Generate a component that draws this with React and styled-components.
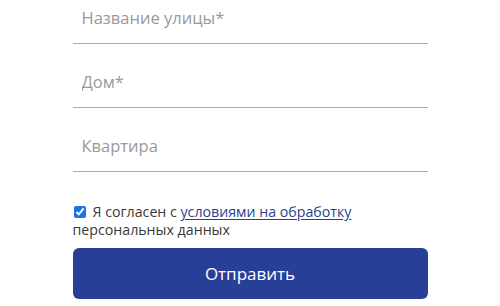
import React from "react";
import styled, { createGlobalStyle } from "styled-components";

const GlobalStyle = createGlobalStyle`
  html, body {
    margin: 0;
    padding: 0;
    background: #fff;
    overflow: hidden;
  }
  body {
    font-family: "Open Sans", "Noto Sans", sans-serif;
  }
`;

const Form = styled.form`
  width: 355px;
  margin: -20px auto 0;
  display: flex;
  flex-direction: column;
`;

const Field = styled.input`
  display: block;
  width: 100%;
  height: 64px;
  box-sizing: border-box;
  padding: 12px 9px 0;
  border: none;
  border-bottom: 1px solid #adadad;
  outline: none;
  background: transparent;
  font-family: inherit;
  font-size: 16.5px;
  color: #333;

  &::placeholder {
    color: #9a9a9a;
  }
`;

const Agree = styled.label`
  display: block;
  margin-top: 31px;
  font-size: 14.2px;
  line-height: 17.5px;
  color: #3a3a3a;
`;

const Check = styled.input`
  width: 12px;
  height: 12px;
  margin: 0 7px 0 1px;
  vertical-align: -1px;
  accent-color: #1a73e8;
`;

const Link = styled.a`
  color: #2b3f92;
  text-decoration: underline;
  text-underline-offset: 2px;
`;

const Submit = styled.button`
  margin-top: 10px;
  height: 51px;
  width: 100%;
  border: none;
  border-radius: 6px;
  background: #283f98;
  color: #fff;
  font-family: inherit;
  font-size: 17px;
  font-weight: 500;
  cursor: pointer;
`;

export default function App() {
  return (
    <>
      <GlobalStyle />
      <Form onSubmit={(e) => e.preventDefault()}>
        <Field placeholder="Название улицы*" />
        <Field placeholder="Дом*" />
        <Field placeholder="Квартира" />
        <Agree>
          <Check type="checkbox" defaultChecked />
          Я согласен с <Link href="#">условиями на обработку</Link>
          <br />
          персональных данных
        </Agree>
        <Submit type="submit">Отправить</Submit>
      </Form>
    </>
  );
}
